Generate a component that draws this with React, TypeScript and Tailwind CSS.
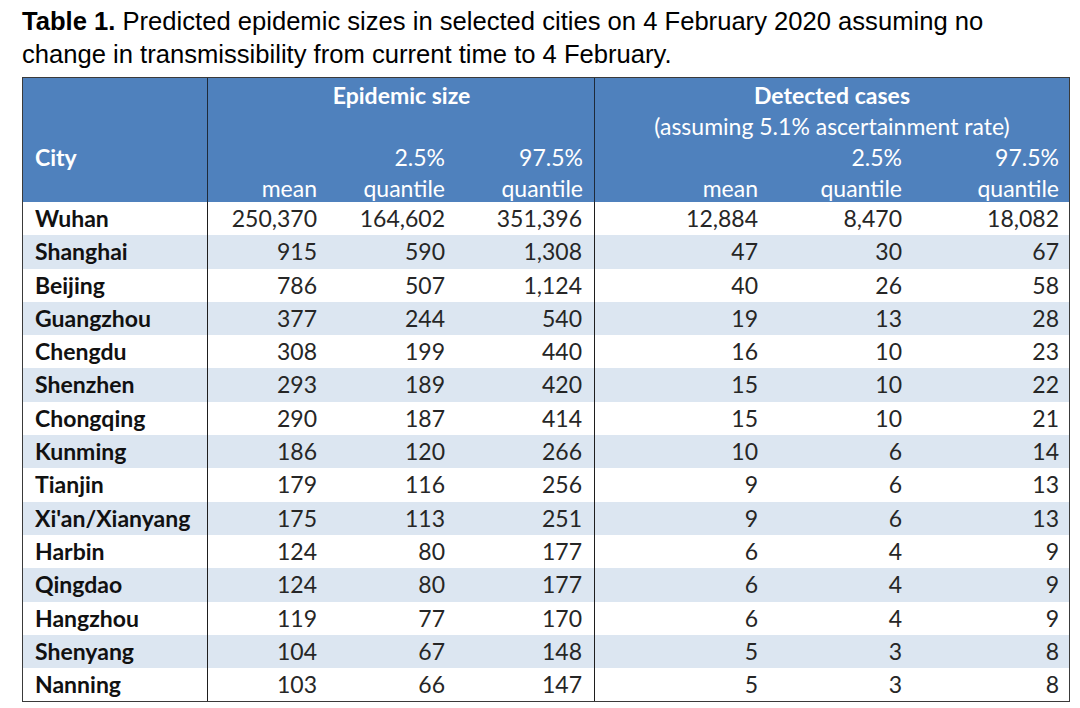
const rows: [string, string, string, string, string, string, string][] = [
  ["Wuhan", "250,370", "164,602", "351,396", "12,884", "8,470", "18,082"],
  ["Shanghai", "915", "590", "1,308", "47", "30", "67"],
  ["Beijing", "786", "507", "1,124", "40", "26", "58"],
  ["Guangzhou", "377", "244", "540", "19", "13", "28"],
  ["Chengdu", "308", "199", "440", "16", "10", "23"],
  ["Shenzhen", "293", "189", "420", "15", "10", "22"],
  ["Chongqing", "290", "187", "414", "15", "10", "21"],
  ["Kunming", "186", "120", "266", "10", "6", "14"],
  ["Tianjin", "179", "116", "256", "9", "6", "13"],
  ["Xi'an/Xianyang", "175", "113", "251", "9", "6", "13"],
  ["Harbin", "124", "80", "177", "6", "4", "9"],
  ["Qingdao", "124", "80", "177", "6", "4", "9"],
  ["Hangzhou", "119", "77", "170", "6", "4", "9"],
  ["Shenyang", "104", "67", "148", "5", "3", "8"],
  ["Nanning", "103", "66", "147", "5", "3", "8"],
]

// column widths: city | epidemic (mean, 2.5, 97.5) | detected (mean, 2.5, 97.5)
const cols = "grid-cols-[185px_113px_128px_146px_167px_144px_163px]"

export default function App() {
  return (
    <div className="w-[1080px] h-[708px] bg-white pt-[5px] pl-[22px]">
      <p className="font-['Liberation_Sans',Arial,sans-serif] text-[25.6px] leading-[33px] text-black w-[1050px] whitespace-nowrap">
        <span className="font-bold">Table 1.</span> Predicted epidemic sizes in selected cities on 4 February 2020 assuming no
        <br />
        change in transmissibility from current time to 4 February.
      </p>

      <div className="mt-[6px] w-[1048px] border border-[#3a3a3a] font-['Lato',Calibri,sans-serif] text-[23px]">
        {/* header */}
        <div className={`grid ${cols} bg-[#4f81bd] text-white h-[124px] pt-[2px]`}>
          <div className="border-r border-[#1e2a3a] -mt-[2px] flex flex-col">
            <div className="h-[64px]" />
            <div className="h-[31px] leading-[31px] pl-[12px] font-bold">City</div>
          </div>
          <div className="col-span-3 border-r border-[#1e2a3a] -mt-[2px] pt-[2px] grid grid-cols-[113px_128px_146px] grid-rows-[31px_31px_31px_29px] leading-[31px]">
            <div className="col-span-3 text-center font-bold">Epidemic size</div>
            <div className="col-span-3" />
            <div />
            <div className="text-right pr-[4px]">2.5%</div>
            <div className="text-right pr-[12px]">97.5%</div>
            <div className="text-right pr-[4px]">mean</div>
            <div className="text-right pr-[4px]">quantile</div>
            <div className="text-right pr-[12px]">quantile</div>
          </div>
          <div className="col-span-3 grid grid-cols-[167px_144px_163px] grid-rows-[31px_31px_31px_29px] leading-[31px]">
            <div className="col-span-3 text-center font-bold">Detected cases</div>
            <div className="col-span-3 text-center whitespace-nowrap">(assuming 5.1% ascertainment rate)</div>
            <div />
            <div className="text-right pr-[4px]">2.5%</div>
            <div className="text-right pr-[10px]">97.5%</div>
            <div className="text-right pr-[4px]">mean</div>
            <div className="text-right pr-[4px]">quantile</div>
            <div className="text-right pr-[10px]">quantile</div>
          </div>
        </div>

        {/* body */}
        {rows.map((r, i) => (
          <div
            key={r[0]}
            className={`grid ${cols} h-[33.3px] leading-[33px] text-[#262626] ${i % 2 === 1 ? "bg-[#dce6f1]" : "bg-white"}`}
          >
            <div className="border-r border-[#1e1e1e] pl-[12px] font-bold text-[#111] whitespace-nowrap">{r[0]}</div>
            <div className="text-right pr-[4px]">{r[1]}</div>
            <div className="text-right pr-[4px]">{r[2]}</div>
            <div className="text-right pr-[12px] border-r border-[#1e1e1e]">{r[3]}</div>
            <div className="text-right pr-[4px]">{r[4]}</div>
            <div className="text-right pr-[4px]">{r[5]}</div>
            <div className="text-right pr-[10px]">{r[6]}</div>
          </div>
        ))}
      </div>
    </div>
  )
}
